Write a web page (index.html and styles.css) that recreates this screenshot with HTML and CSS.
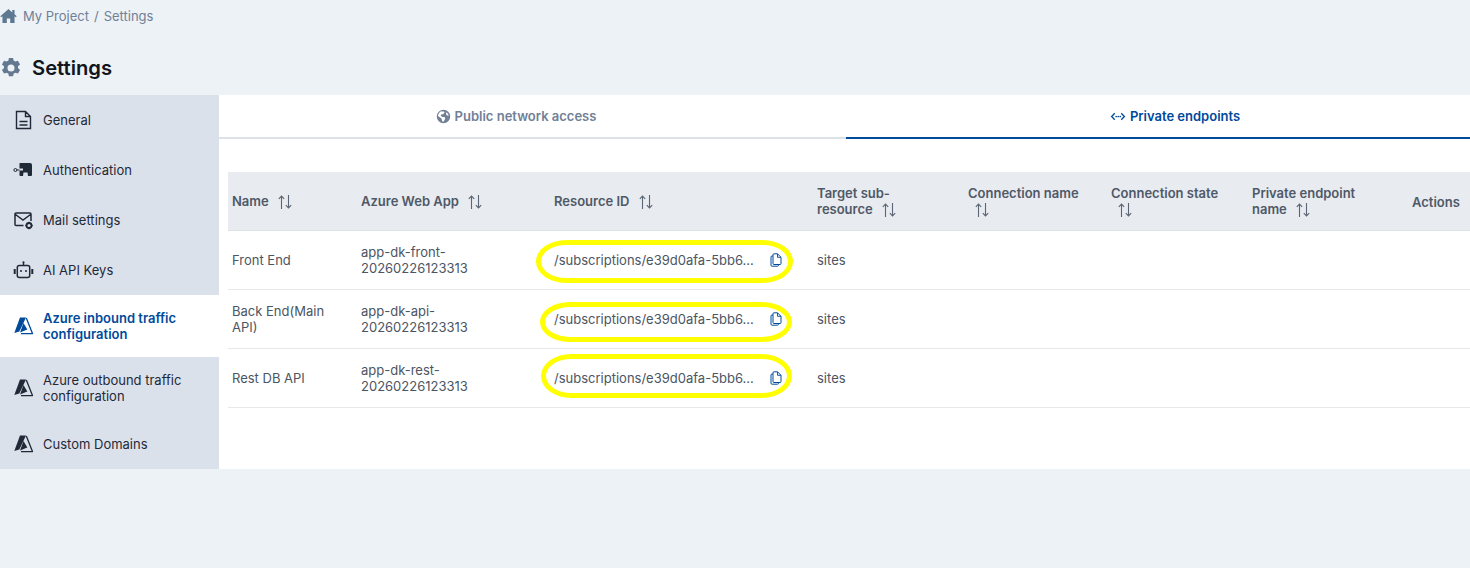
FILE: index.html
```html
<!DOCTYPE html>
<html lang="en">
<head>
<meta charset="utf-8">
<title>Settings</title>
<link rel="stylesheet" href="styles.css">
</head>
<body>
<svg class="defs" width="0" height="0" aria-hidden="true">
  <defs>
    <symbol id="azure" viewBox="0 0 20 20">
      <path d="M6.500 1.500h6L5.800 15.500 .8 17z" fill="currentColor"/>
      <path d="M10 7 13.800 13.600 6.500 16.500z" fill="currentColor"/>
      <path d="M12.800 2 19 17.600H7.500" fill="none" stroke="currentColor" stroke-width="1.300" stroke-linejoin="round"/>
    </symbol>
    <symbol id="sort" viewBox="0 0 16 16">
      <path d="M4.500 15V2M1.800 4.800 4.500 2l2.700 2.800M11.500 1v13M8.800 11.200l2.700 2.800 2.700-2.800" fill="none" stroke="currentColor" stroke-width="1.100"/>
    </symbol>
    <symbol id="copy" viewBox="0 0 12 14">
      <path d="M4 .8h3.500l3.500 3.500v6.200a1 1 0 0 1-1 1H4a1 1 0 0 1-1-1V1.800a1 1 0 0 1 1-1z" fill="none" stroke="currentColor" stroke-width="1"/>
      <path d="M7.500 .8v3.500H11" fill="none" stroke="currentColor" stroke-width=".9"/>
      <path d="M3 3H2a1 1 0 0 0-1 1v8.200a1 1 0 0 0 1 1h5.500a1 1 0 0 0 1-1v-.7" fill="none" stroke="currentColor" stroke-width="1"/>
    </symbol>
  </defs>
</svg>

<nav class="crumbs">
  <svg class="home" viewBox="0 0 18 16"><path d="M9 .6.300 8.200l1 1.200L2.600 8.300V15.400h4.600v-4.700h3.600v4.700h4.600V8.300l1.300 1.100 1-1.200-2.300-2V1.700h-2.400v2.500z" fill="currentColor"/></svg>
  <span>My Project</span><span class="sep">/</span><span>Settings</span>
</nav>

<header class="title">
  <svg class="gear" viewBox="1.500 1.500 21 21"><path fill-rule="evenodd" d="M14.200 1.500l.6 2.900c.6.200 1.200.5 1.700.9l2.800-.9 2.200 3.800-2.200 2c.1.600.1 1.200 0 1.800l2.200 2-2.200 3.800-2.800-.9c-.5.400-1.100.7-1.700.9l-.6 2.900H9.800l-.6-2.900c-.6-.2-1.200-.5-1.700-.9l-2.800.9-2.200-3.800 2.200-2c-.1-.6-.1-1.200 0-1.800l-2.200-2 2.200-3.800 2.800.9c.5-.4 1.100-.7 1.700-.9l.6-2.900zM12 8.300a3.700 3.700 0 1 0 0 7.400 3.700 3.700 0 0 0 0-7.400z" fill="currentColor"/></svg>
  <h1>Settings</h1>
</header>

<main class="layout">
  <aside class="side">
    <a class="item">
      <svg class="ico" viewBox="0 0 20 20"><path d="M3 1.500h9l5 5v12H3z M12 1.500v5h5M6 11.500h8M6 15h8" fill="none" stroke="currentColor" stroke-width="1.400"/></svg>
      <span>General</span>
    </a>
    <a class="item">
      <svg class="ico" viewBox="0 0 20 20"><circle cx="1.900" cy="10" r="1.500" fill="none" stroke="currentColor" stroke-width="1"/><path d="M3.400 9.500H6v1H3.400z" fill="currentColor"/><path fill-rule="evenodd" d="M6.500 3h10a2 2 0 0 1 2 2v10a1 1 0 0 1-1 1h-3l-.5-3.500h-4L9.500 16h-2.500a1 1 0 0 1-1-1v-4.500h3.500v-2h-3.500V3.500a.5.5 0 0 1 .5-.5z" fill="currentColor"/></svg>
      <span>Authentication</span>
    </a>
    <a class="item">
      <svg class="ico" viewBox="0 0 20 20"><path d="M10 15.500H2.500a1 1 0 0 1-1-1V4a1 1 0 0 1 1-1h14a1 1 0 0 1 1 1v7M2 4.500l7.500 5.500L17 4.500" fill="none" stroke="currentColor" stroke-width="1.500"/><circle cx="15.500" cy="15.500" r="2.500" fill="none" stroke="currentColor" stroke-width="1.800"/><path d="M15.500 11.800v1.400M15.500 17.800v1.400M11.800 15.500h1.400M17.800 15.500h1.400" stroke="currentColor" stroke-width="1.300"/></svg>
      <span>Mail settings</span>
    </a>
    <a class="item">
      <svg class="ico" viewBox="0 0 20 20"><path d="M10 2v3" stroke="currentColor" stroke-width="1.400"/><circle cx="10" cy="2.200" r="1" fill="currentColor"/><rect x="3.800" y="5.500" width="12.400" height="12" rx="2" fill="none" stroke="currentColor" stroke-width="1.500"/><path d="M1.200 9v5M18.800 9v5" stroke="currentColor" stroke-width="2"/><circle cx="7.500" cy="11" r="1" fill="currentColor"/><circle cx="12.500" cy="11" r="1" fill="currentColor"/></svg>
      <span>AI API Keys</span>
    </a>
    <a class="item active tall">
      <svg class="ico"><use href="#azure"/></svg>
      <span>Azure inbound traffic configuration</span>
    </a>
    <a class="item tall">
      <svg class="ico"><use href="#azure"/></svg>
      <span>Azure outbound traffic configuration</span>
    </a>
    <a class="item">
      <svg class="ico"><use href="#azure"/></svg>
      <span>Custom Domains</span>
    </a>
  </aside>

  <section class="panel">
    <div class="tabs">
      <div class="tab pub">
        <svg class="tab-ico" viewBox="0 0 16 16"><path fill-rule="evenodd" d="M8 .8a7.200 7.200 0 1 0 0 14.400A7.200 7.200 0 0 0 8 .8zM5.500 2.500c1 .4 2 .3 3 .1l.5 1.400-1.500 1.500-1.800.2-.6 1.600 1.700 1.100 2.200.1.900 1.400-1.600 3.300c-.4.200-1 .3-1.500.2l-1-3.200-1.700-1.500L2 7.400C2.300 5.300 3.600 3.400 5.500 2.500zM11 3.400c1.300.9 2.300 2.300 2.600 3.800l-1.700-.2-1.400-1.600z" fill="currentColor"/></svg>
        <span>Public network access</span>
      </div>
      <div class="tab on">
        <svg class="tab-ico" viewBox="0 0 16 16"><path d="M4.500 4.500 1.200 8l3.300 3.500M11.500 4.500 14.800 8l-3.300 3.500" fill="none" stroke="currentColor" stroke-width="1.400"/><circle cx="6" cy="8" r=".9" fill="currentColor"/><circle cx="8.200" cy="8" r=".9" fill="currentColor"/><circle cx="10.400" cy="8" r=".9" fill="currentColor"/></svg>
        <span>Private endpoints</span>
      </div>
    </div>

    <div class="table-wrap">
      <table>
        <colgroup>
          <col class="c1"><col class="c2"><col class="c3"><col class="c4"><col class="c5"><col class="c6"><col class="c7"><col class="c8">
        </colgroup>
        <thead>
          <tr>
            <th>Name <svg class="sort"><use href="#sort"/></svg></th>
            <th>Azure Web App <svg class="sort"><use href="#sort"/></svg></th>
            <th>Resource ID <svg class="sort"><use href="#sort"/></svg></th>
            <th>Target sub-<br>resource <svg class="sort"><use href="#sort"/></svg></th>
            <th>Connection name<br><svg class="sort lead"><use href="#sort"/></svg></th>
            <th>Connection state<br><svg class="sort lead"><use href="#sort"/></svg></th>
            <th>Private endpoint<br>name <svg class="sort"><use href="#sort"/></svg></th>
            <th>Actions</th>
          </tr>
        </thead>
        <tbody>
          <tr>
            <td>Front End</td>
            <td>app-dk-front-<br>20260226123313</td>
            <td><div class="rid"><span class="mark m1"></span><span>/subscriptions/e39d0afa-5bb6...</span><svg class="copy"><use href="#copy"/></svg></div></td>
            <td>sites</td><td></td><td></td><td></td><td></td>
          </tr>
          <tr>
            <td>Back End(Main<br>API)</td>
            <td>app-dk-api-<br>20260226123313</td>
            <td><div class="rid"><span class="mark m2"></span><span>/subscriptions/e39d0afa-5bb6...</span><svg class="copy"><use href="#copy"/></svg></div></td>
            <td>sites</td><td></td><td></td><td></td><td></td>
          </tr>
          <tr>
            <td>Rest DB API</td>
            <td>app-dk-rest-<br>20260226123313</td>
            <td><div class="rid"><span class="mark m3"></span><span>/subscriptions/e39d0afa-5bb6...</span><svg class="copy"><use href="#copy"/></svg></div></td>
            <td>sites</td><td></td><td></td><td></td><td></td>
          </tr>
        </tbody>
      </table>
    </div>
  </section>
</main>
</body>
</html>
```

FILE: styles.css
```css
* { box-sizing: border-box; }
html, body { margin: 0; height: 100%; overflow: hidden; }
body {
  background: #edf2f7;
  font-family: Inter, "Liberation Sans", sans-serif;
  font-size: 13px;
  line-height: 16px;
  color: #1f2937;
}
.defs { display: block; height: 0; }

.crumbs {
  height: 32px;
  display: flex;
  align-items: center;
  color: #718096;
  font-size: 13px;
}
.home { width: 17px; height: 16px; color: #5f7892; margin-right: 6px; }
.sep { margin: 0 5px; }

.title {
  height: 63px;
  display: flex;
  align-items: center;
  padding-top: 9px;
}
.gear { width: 20px; height: 20px; color: #64788f; margin-left: 1px; }
h1 {
  margin: 0 0 0 11px;
  font-size: 20.2px;
  line-height: 28px;
  font-weight: 600;
  color: #12161c;
}

.layout { display: flex; height: 374px; }
.side { width: 219px; flex: none; background: #dbe1ea; display: flex; flex-direction: column; }
.item {
  height: 50px;
  flex: none;
  display: flex;
  align-items: center;
  gap: 9px;
  padding: 0 30px 0 13px;
  color: #1f2937;
}
.item.tall { height: 62px; }
.item.active { background: #fff; color: #004a9c; font-weight: 600; }
.ico { width: 21px; height: 20px; flex: none; }

.panel { flex: 1; min-width: 0; background: #fff; }
.tabs { display: flex; height: 44px; }
.tab {
  flex: 1;
  display: flex;
  align-items: center;
  justify-content: center;
  gap: 4px;
  font-weight: 600;
  color: #718096;
  border-bottom: 2px solid #dde2e8;
}
.tab.pub { flex: 0 0 627px; padding-right: 33px; }
.tab.on { color: #004a9c; border-bottom-color: #004a9c; padding-left: 34px; }
.tab-ico { width: 15px; height: 15px; flex: none; }
.tab.on .tab-ico { width: 16px; }

.table-wrap { padding: 33px 0 0 9px; }
table { width: 1242px; table-layout: fixed; border-collapse: collapse; }
.c1 { width: 129px; } .c2 { width: 193px; } .c3 { width: 263px; } .c4 { width: 151px; }
.c5 { width: 143px; } .c6 { width: 141px; } .c7 { width: 160px; } .c8 { width: 62px; }
th {
  height: 58px;
  padding: 2px 4px 0;
  background: #e8ebef;
  border-bottom: 1px solid #dfe3e8;
  text-align: left;
  font-weight: 600;
  color: #4f5968;
}
td {
  height: 59px;
  padding: 0 4px;
  border-bottom: 1px solid #e6e8eb;
  color: #4b5563;
  vertical-align: middle;
}
.sort { width: 16px; height: 16px; vertical-align: -4px; color: #5b6575; margin-left: 5px; }
.sort.lead { margin-left: 6px; }
.rid { position: relative; display: flex; align-items: center; justify-content: space-between; width: 228px; }
.copy { width: 12px; height: 14px; color: #004a9c; flex: none; }
.mark {
  position: absolute;
  border: 5px solid #ffff00;
  border-radius: 30px / 50%;
  pointer-events: none;
}
.m1 { left: -18px; top: -12px; width: 257px; height: 43px; }
.m2 { left: -14px; top: -9px; width: 252px; height: 40px; }
.m3 { left: -13px; top: -16px; width: 251px; height: 44px; }
```
